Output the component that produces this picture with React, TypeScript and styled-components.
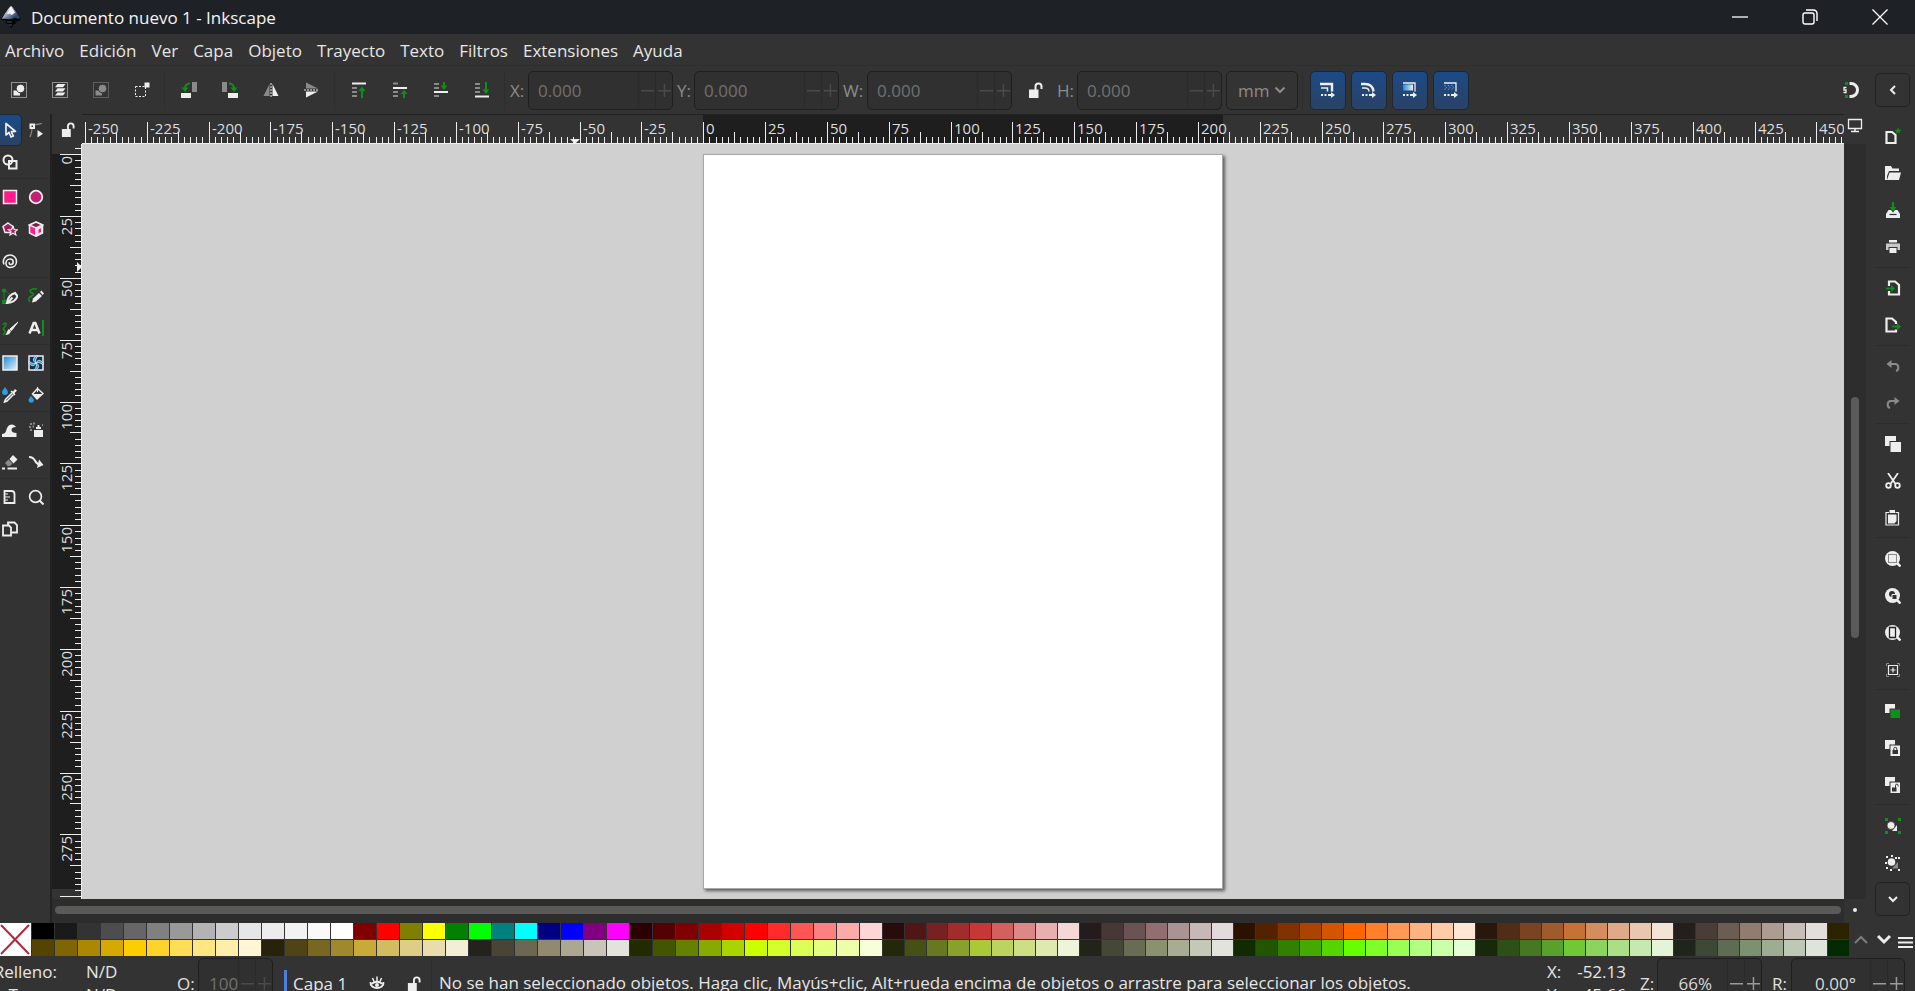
import React, { useLayoutEffect, useRef, useState } from "react";
import styled, { createGlobalStyle, css } from "styled-components";

const W = "#eeeeee";
const G = "#8a8a8a";
const GREEN = "#0f8f17";
const PINK = "#ff1d8e";
const BLUE = "#2a9fe0";
const MM = 2.4735;

const GlobalStyle = createGlobalStyle`
  *, *::before, *::after { box-sizing: border-box; }
  body {
    margin: 0;
    background: #333333;
    color: #e6e6e6;
    font-family: "Open Sans", "Noto Sans", sans-serif;
    font-size: 17px;
    overflow: hidden;
  }
  button, input, select { font: inherit; color: inherit; margin: 0; padding: 0; }
  button { background: none; border: 0; }
  svg { display: block; }
`;

const Shell = styled.div`
  display: grid;
  grid-template-rows: 34px 32px minmax(0, 1fr) 33px 35px;
  height: 100vh;
`;

const TitleBar = styled.header`
  display: flex;
  align-items: center;
  background: #1e2226;
  color: #f4f4f4;
`;
const Logo = styled.div`
  width: 31px;
  padding-left: 1px;
`;
const Title = styled.h1`
  flex: 1;
  margin: 0;
  font-size: 17px;
  font-weight: 400;
`;
const WindowButton = styled.button`
  display: grid;
  place-items: center;
  width: 70px;
  height: 34px;
`;

const MenuBar = styled.nav`
  display: flex;
  align-items: center;
  gap: 15px;
  padding: 3px 0 0 5px;
  border-bottom: 1px solid #2e2e2e;
`;
const MenuItem = styled.button`
  line-height: 24px;
`;

const Workspace = styled.div`
  display: grid;
  grid-template-columns: minmax(0, 1fr) 49px;
  min-height: 0;
`;
const Editor = styled.div`
  display: grid;
  grid-template-rows: 48px minmax(0, 1fr);
  min-height: 0;
`;

const ToolBar = styled.div`
  display: flex;
  align-items: center;
  gap: 4px;
`;
const BarButton = styled.button`
  display: grid;
  place-items: center;
  flex: none;
  width: 37px;
  height: 39px;
`;
const BarSeparator = styled.span`
  flex: none;
  width: 2px;
  height: 39px;
  border-left: 1px solid #2e2e2e;
`;
const Field = styled.div`
  display: flex;
  align-items: center;
  flex: none;
`;
const FieldLabel = styled.label<{ $width: number; $dim?: boolean }>`
  width: ${(p) => p.$width}px;
  color: ${(p) => (p.$dim ? "#8c8c8c" : "#e0e0e0")};
`;
const Spin = styled.div<{ $width: number; $height: number }>`
  display: flex;
  flex: none;
  width: ${(p) => p.$width}px;
  height: ${(p) => p.$height}px;
  background: #303030;
  border: 1px solid #1f1f1f;
  border-radius: 5px;
  overflow: hidden;
`;
const SpinInput = styled.input<{ $dim?: boolean; $align: string; $pad: number }>`
  flex: 1;
  min-width: 0;
  padding: 0 ${(p) => (p.$align === "right" ? p.$pad : 0)}px 0 ${(p) => (p.$align === "left" ? p.$pad : 0)}px;
  border: 0;
  outline: 0;
  background: none;
  text-align: ${(p) => p.$align};
  color: ${(p) => (p.$dim ? "#707070" : "#d8d8d8")};
`;
const SpinButton = styled.button<{ $dim?: boolean }>`
  display: grid;
  place-items: center;
  width: 17px;
  border-left: 1px solid #2b2b2b;
  color: ${(p) => (p.$dim ? "#4a4a4a" : "#9a9a9a")};
`;
const UnitBox = styled.div`
  display: flex;
  align-items: center;
  flex: none;
  width: 72px;
  height: 39px;
  padding-right: 11px;
  border: 1px solid #1f1f1f;
  border-radius: 5px;
  color: #8c8c8c;
`;
const UnitSelect = styled.select`
  flex: 1;
  min-width: 0;
  padding-left: 11px;
  appearance: none;
  border: 0;
  background: none;
  color: #8c8c8c;
`;
const ToggleGroup = styled.div`
  display: flex;
  gap: 5px;
  padding-left: 2px;
`;
const Toggle = styled.button`
  display: grid;
  place-items: center;
  width: 36px;
  height: 39px;
  border: 1px solid #1b2733;
  border-radius: 5px;
  background: linear-gradient(#1b4a87, #2a4265);
`;
const Spacer = styled.span`
  flex: 1;
`;
const SnapButton = styled.button`
  display: grid;
  place-items: center;
  width: 30px;
  height: 39px;
`;

const Body = styled.div`
  display: grid;
  grid-template-columns: 52px minmax(0, 1fr);
  min-height: 0;
`;
const ToolBox = styled.div`
  border-right: 2px solid #222222;
  overflow: hidden;
`;
const ToolGroup = styled.div`
  display: grid;
  grid-template-columns: 22px 28px;
  grid-auto-rows: 32px;
  & + & {
    border-top: 1px solid #2d2d2d;
    padding-top: 2px;
  }
`;
const ToolButton = styled.button<{ $active?: boolean; $first?: boolean }>`
  display: grid;
  place-items: center;
  ${(p) => p.$first && css`padding-right: 2px;`}
  ${(p) =>
    p.$active &&
    css`
      border: 1px solid #1b2733;
      border-left: 0;
      border-radius: 0 5px 5px 0;
      background: linear-gradient(#1b4a87, #2a4265);
    `}
`;

const CanvasGrid = styled.div`
  display: grid;
  grid-template-columns: 30px minmax(0, 1fr) 22px;
  grid-template-rows: 30px minmax(0, 1fr) 24px;
  min-height: 0;
`;
const Corner = styled.button<{ $top?: boolean }>`
  display: grid;
  place-items: ${(p) => (p.$top ? "start center" : "center")};
  padding-top: ${(p) => (p.$top ? 4 : 0)}px;
`;
const TopRuler = styled.div`
  border-top: 1px solid #222222;
  overflow: hidden;
`;
const SideRuler = styled.div`
  overflow: hidden;
  background: #333333;
`;
const Tick = styled.text`
  font-size: 15px;
  fill: #dcdcdc;
`;
const Canvas = styled.main`
  display: grid;
  place-items: center;
  overflow: hidden;
  background: #d0d0d0;
`;
const Page = styled.div`
  width: 520px;
  height: 735px;
  background: #ffffff;
  border: 1px solid #a8a8a8;
  box-shadow: 2px 2px 3px rgba(0, 0, 0, 0.55);
`;
const VScroll = styled.div`
  display: flex;
  flex-direction: column;
  align-items: center;
  background: #2d2d2d;
`;
const VLead = styled.span`
  flex: 253 0 0;
`;
const VThumb = styled.span`
  flex: 241 0 0;
  width: 8px;
  border-radius: 4px;
  background: #5a5a5a;
`;
const VTrail = styled.span`
  flex: 261 0 0;
`;
const HScroll = styled.div`
  grid-column: 1 / 3;
  padding: 7px 3px 0;
  background: #2d2d2d;
`;
const HThumb = styled.div`
  height: 8px;
  border-radius: 4px;
  background: #5a5a58;
`;

const CommandBar = styled.aside`
  display: flex;
  flex-direction: column;
  min-height: 0;
  padding: 7px 5px 7px 9px;
`;
const FrameButton = styled.button`
  display: grid;
  place-items: center;
  flex: none;
  height: 34px;
  border: 1px solid #222222;
  border-radius: 5px;
`;
const CommandList = styled.div`
  display: flex;
  flex-direction: column;
  flex: 1;
  min-height: 0;
  padding: 11px 0 1px;
  overflow: hidden;
`;
const CommandButton = styled.button`
  display: grid;
  place-items: center;
  flex: 1 1 0;
  min-height: 0;
`;
const CommandSeparator = styled.span`
  flex: none;
  height: 1px;
  margin: 1px 0 2px;
  background: #2c2c2c;
`;

const PaletteBar = styled.div`
  display: grid;
  grid-template-columns: 31px minmax(0, 1fr) 65px;
  column-gap: 1px;
`;
const NoColor = styled.button`
  background: #ffffff;
`;
const Swatches = styled.div`
  display: grid;
  grid-template-columns: repeat(37, 22fr) repeat(44, 21fr);
  grid-template-rows: 16px 16px;
  gap: 1px;
`;
const Swatch = styled.button<{ $color: string }>`
  background: ${(p) => p.$color};
`;
const PaletteButtons = styled.div`
  display: grid;
  grid-template-columns: 22px 24px 18px;
  align-items: center;
`;
const PaletteButton = styled.button`
  display: grid;
  place-items: center;
  height: 33px;
`;

const StatusBar = styled.footer`
  overflow: hidden;
`;
const StatusRow = styled.div`
  display: flex;
  align-items: center;
  height: 50px;
  margin-top: 2px;
`;
const FillStroke = styled.dl`
  display: grid;
  flex: none;
  grid-template-columns: 57px 90px;
  column-gap: 29px;
  width: 177px;
  margin: 0;
  line-height: 23px;
`;
const Term = styled.dt`
  display: flex;
  justify-content: flex-end;
  white-space: nowrap;
`;
const Value = styled.dd<{ $right?: boolean }>`
  margin: 0;
  text-align: ${(p) => (p.$right ? "right" : "left")};
`;
const LayerButton = styled.button`
  flex: none;
  width: 75px;
  height: 26px;
  margin-left: 11px;
  padding-left: 6px;
  border-left: 3px solid #4a7fe0;
  text-align: left;
`;
const StatusIcon = styled.button`
  display: grid;
  place-items: center;
  flex: none;
  width: 36px;
  height: 30px;
`;
const Message = styled.p`
  flex: 1;
  min-width: 0;
  margin: 0;
  padding-left: 7px;
  border-left: 1px solid #2e2e2e;
  line-height: 50px;
  white-space: nowrap;
  overflow: hidden;
`;
const Coordinates = styled.dl`
  display: grid;
  flex: none;
  grid-template-columns: 19px 60px;
  margin: 0 14px 0 0;
  line-height: 23px;
`;
const StatusGap = styled.span`
  flex: none;
  width: 10px;
`;

type IconProps = { children: React.ReactNode; size?: number };
const Icon = ({ children, size = 16 }: IconProps) => (
  <svg width={size} height={size} viewBox="0 0 16 16" fill="none" aria-hidden="true">
    {children}
  </svg>
);

const dotted = (c: string) => <rect x="0.5" y="0.5" width="15" height="15" stroke={c} strokeDasharray="1 1" />;

const lockOpen = (
  <>
    <path d="M2 7.500h9.500V16H2z" fill={W} />
    <path d="M8.500 8.500V4.500a3 3 0 0 1 6 0V7" stroke={W} strokeWidth="2" />
  </>
);
const zigArrow = (
  <>
    <path d="M1 13h2m1.500 0h2m1.500 0h4" stroke={W} strokeWidth="2" />
    <path d="M11 10v6l4-3z" fill={W} />
  </>
);

const barIcons = {
  selectAll: <Icon>{dotted(W)}<path d="M2.500 8.500h6.500v5H2.500z" fill={W} /><circle cx="9.500" cy="6.500" r="4.300" fill={W} stroke="#333" strokeWidth="1" /></Icon>,
  selectLayers: <Icon>{dotted(W)}<path d="M5.500 2H13.500l-2.500 3.200H3zM5.500 6.200H13.500L11 9.400H3zM5.500 10.400H13.500L11 13.600H3z" fill={W} /></Icon>,
  deselect: <Icon>{dotted(G)}<path d="M2.500 8.500h6.500v5H2.500z" fill={G} /><circle cx="9.500" cy="6.500" r="4.300" fill={G} stroke="#333" strokeWidth="1" /></Icon>,
  touch: <Icon><path d="M1.500 4.500h10v10h-10z" stroke={W} strokeDasharray="2 1.500" /><path d="M10.500 0.500h5v5h-5z" fill={W} /></Icon>,
  ccw: <Icon><path d="M0 11h10v5H0z" fill={W} /><path d="M11 0h5v10h-5z" fill={G} /><path d="M9 1.500C6 1.500 4 3.500 4 7" stroke={GREEN} strokeWidth="2" /><path d="M0.500 5.500h7L4 10z" fill={GREEN} /></Icon>,
  cw: <Icon><path d="M6 11h10v5H6z" fill={W} /><path d="M0 0h5v10H0z" fill={G} /><path d="M7 1.500c3 0 5 2 5 5.500" stroke={GREEN} strokeWidth="2" /><path d="M8.500 5.500h7L12 10z" fill={GREEN} /></Icon>,
  flipH: <Icon><path d="M6.500 2v12H0.500z" fill={G} /><path d="M9.500 2v12h6z" fill={W} /><path d="M8 1v15" stroke={W} strokeDasharray="2 1" /></Icon>,
  flipV: <Icon><path d="M2 6.500V0.500l12 6z" fill={G} /><path d="M2 9.500v6l12-6z" fill={W} /><path d="M0 8h15" stroke={W} strokeDasharray="2 1" /></Icon>,
  toTop: <Icon><path d="M1 1.500h14" stroke={W} strokeWidth="2" /><path d="M1 6h5M1 10h5M1 14h5" stroke={G} strokeWidth="2" /><path d="M11 16V7" stroke={GREEN} strokeWidth="2" /><path d="M7.500 9L11 4.500 14.500 9z" fill={GREEN} /></Icon>,
  raise: <Icon><path d="M1 6h14" stroke={W} strokeWidth="2" /><path d="M1 1.500h5M1 10h5M1 14h5" stroke={G} strokeWidth="2" /><path d="M12 16v-5" stroke={GREEN} strokeWidth="2" /><path d="M8.500 12L12 8l3.500 4z" fill={GREEN} /></Icon>,
  lower: <Icon><path d="M1 10h14" stroke={W} strokeWidth="2" /><path d="M1 2h5M1 6h5M1 14h5" stroke={G} strokeWidth="2" /><path d="M11 0v4" stroke={GREEN} strokeWidth="2" /><path d="M7.500 3.500L11 8l3.500-4.500z" fill={GREEN} /></Icon>,
  toBottom: <Icon><path d="M1 14.500h14" stroke={W} strokeWidth="2" /><path d="M1 2h5M1 6h5M1 10h5" stroke={G} strokeWidth="2" /><path d="M12 0v8" stroke={GREEN} strokeWidth="2" /><path d="M8.500 7.500L12 12l3.500-4.500z" fill={GREEN} /></Icon>,
};

const toggleIcons: [string, React.ReactNode][] = [
  ["Escalar grosor del trazo", <Icon><path d="M0 2h12v7.500" stroke={W} strokeWidth="2.400" /><path d="M1 6h6.500v3.500" stroke={W} strokeWidth="1.500" />{zigArrow}</Icon>],
  ["Escalar esquinas redondeadas", <Icon><path d="M0 2h4c5 0 8 3 8.500 7.500" stroke={W} strokeWidth="2.400" /><path d="M1 6h3c2.500 0 4 1.500 4 3.500" stroke={W} strokeWidth="1.500" />{zigArrow}</Icon>],
  ["Transformar degradados", <Icon><defs><linearGradient id="bar-grad"><stop stopColor="#1d8fe0" /><stop offset="1" stopColor={W} /></linearGradient></defs><path d="M1 1h12v8.500" stroke={W} strokeWidth="1.300" /><path d="M1 2.500h10v6H1z" fill="url(#bar-grad)" />{zigArrow}</Icon>],
  ["Transformar patrones", <Icon><path d="M1 1h12v8.500" stroke={W} strokeWidth="1.300" /><path d="M1.500 3l2 2.500-2 2.500M5 3l2 2.500L5 8M8.500 3l2 2.500-2 2.500" stroke="#5fb4ee" strokeDasharray="1.500 .7" />{zigArrow}</Icon>],
];

type Tool = { label: string; icon: React.ReactNode; active?: boolean };
const toolGroups: Tool[][] = [
  [
    { label: "Seleccionar", active: true, icon: <Icon><path d="M4 1.500v11.500l3-2.500 2 4.500 2.300-1-2-4.300 4.200-.2z" stroke={W} strokeWidth="1.700" strokeLinejoin="round" /></Icon> },
    { label: "Nodos", icon: <Icon><path d="M2.500 2.500h3.500V6H2.500z" stroke={W} strokeWidth="2" /><path d="M7 3c3-1.500 5-1 7-1.500M4 7c0 3-1 5-2 8" stroke={G} strokeWidth="1.200" /><path d="M9.500 8v7.500L15 11.800z" fill={W} /></Icon> },
    { label: "Constructor de formas", icon: <Icon><circle cx="6" cy="6" r="4.500" stroke={W} strokeWidth="2" /><path d="M7 7h7.500v7.500H7z" stroke={W} strokeWidth="2" /></Icon> },
  ],
  [
    { label: "Rectángulo", icon: <Icon><rect x="1.500" y="1.500" width="13" height="13" fill={PINK} stroke={W} strokeWidth="1.500" /></Icon> },
    { label: "Elipse", icon: <Icon><circle cx="8" cy="8" r="6.300" fill="#c41f73" stroke={W} strokeWidth="1.800" /></Icon> },
    { label: "Estrella", icon: <Icon><path d="M6 2l5 3.500-1.800 6H3L1 5.500z" fill="#a0205f" stroke={W} strokeWidth="1.500" /><path d="M11 5.500l1.300 3 3.200.2-2.500 2 .9 3.300-2.900-1.700L8 14l1-3.200-2.500-2 3.200-.3z" fill="#a0205f" stroke={W} strokeWidth="1.200" /></Icon> },
    { label: "Caja 3D", icon: <Icon><path d="M8 1l6.500 3v8L8 15.300 1.500 12V4z" fill={PINK} stroke={W} strokeWidth="1.500" /><path d="M1.500 4L8 7l6.500-3L8 1z" fill="#7c1f4c" stroke={W} strokeWidth="1.500" /><path d="M8 7l6-3v8l-6 3z" fill="#f8dfea" /><path d="M8 7v8" stroke={W} strokeWidth="2" /><path d="M10.500 8.500L13 7.300v3.700l-2.500 1.300z" fill={PINK} /></Icon> },
    { label: "Espiral", icon: <Icon><path d="M2 11.500C0 7 3 2 8 2c4 0 6.500 3 6.500 6.500 0 4-3 6-6 6-3 0-4.500-2-4.500-4.300C4 8 5.500 6 8 6c2 0 3.200 1.300 3.200 3S10 11.500 8.700 11.500 7 10.500 7.500 9.200" stroke={W} strokeWidth="1.600" /></Icon> },
  ],
  [
    { label: "Pluma", icon: <Icon><path d="M2 2v12" stroke={GREEN} /><circle cx="2" cy="2.500" r="2" fill={GREEN} /><path d="M0 12h4v4H0z" fill={GREEN} /><path d="M2 3c4 0 4 3 6 3" stroke={GREEN} /><path d="M5 15C5.500 10 8 6.500 13 5l2.500 3C14 12.500 11 14.500 5.500 15l5-5.500" stroke={W} strokeWidth="2" /></Icon> },
    { label: "Lápiz", icon: <Icon><path d="M9 1C4 0 0 3 3 4.500S7 6 3 8.500 1 12 2 14" stroke={GREEN} strokeWidth="1.500" /><path d="M4 14.500l1-4L11 5l3 3-6 5.500z" fill={W} /><path d="M12 4l1.500-1.500L16 5.500 14.500 7z" fill={W} /></Icon> },
    { label: "Pincel caligráfico", icon: <Icon><path d="M1 5c2-3 4-2 3 0S0 9 2 10s1 3-1 5" stroke={GREEN} strokeWidth="1.500" /><path d="M16 2L9.500 10.500 8 9z" fill={W} stroke={W} /><path d="M7 9l2 2c-1 3-3 4-6 4 2-1 2-5 4-6z" fill={W} /></Icon> },
    { label: "Texto", icon: <Icon><path d="M1.500 13.500L5.700 3h1.600L11.500 13.500M3 10h7" stroke={W} strokeWidth="2.500" /><path d="M15 0v16" stroke={GREEN} strokeWidth="2" /></Icon> },
  ],
  [
    { label: "Degradado", icon: <Icon><defs><linearGradient id="tool-grad" x2="1" y2="1"><stop stopColor="#1b86d0" /><stop offset="1" stopColor="#e6f4fd" /></linearGradient></defs><rect x="1" y="1" width="14" height="14" fill="url(#tool-grad)" stroke={W} strokeWidth="1.500" /></Icon> },
    { label: "Malla", icon: <Icon><rect x="1" y="1" width="14" height="14" fill="#16324a" stroke={W} strokeWidth="1.500" /><path d="M8 8C4 6 5 3 8 1h2C8 3 7 5 8 8zM8 8c4 2 3 5 0 7H6c2-2 3-4 2-7zM8 8c-2 4-5 3-7 0V6c2 2 4 3 7 2zM8 8c2-4 5-3 7 0v2c-2-2-4-3-7-2z" fill={BLUE} stroke="#e4f3fc" strokeWidth=".8" /></Icon> },
    { label: "Cuentagotas", icon: <Icon><path d="M3 0c2 3 3 4 3 5a3 3 0 0 1-6 0c0-1 1-2 3-5z" fill={BLUE} /><path d="M10 6L3.500 12.500 2.500 15l2.500-1L11.500 7.500" stroke={W} strokeWidth="1.500" /><path d="M8.500 4.500l1-1 1.500 1 2-2.500 2 1.800L12.500 6l1 1.500-1 1z" fill={W} /></Icon> },
    { label: "Cubo de pintura", icon: <Icon><path d="M3 9c2 2.500 3 3.500 3 4.500a2.800 2.800 0 0 1-5.500 0c0-1 .5-2 2.500-4.500z" fill={BLUE} /><path d="M9.500 1.500l5.500 5-6 5.500-4.500-5z" stroke={W} strokeWidth="1.500" /><path d="M5 7h9.500L9 12z" fill={W} /><path d="M9.500 0v5" stroke={W} /></Icon> },
  ],
  [
    { label: "Retoque", icon: <Icon><path d="M0 15v-3c3.500 0 4-3 5-6 2-4.500 7-4.500 9-1-3 0-4.500 1-4.500 3s2 3 5 3v4z" fill={W} /></Icon> },
    { label: "Aerosol", icon: <Icon><path d="M6 8h9v7H6zM8 5h5v2H8zM9.500 3h2v2h-2z" fill={W} /><path d="M2 2h2M5 1.500h2M1 5h2M4.500 4.500h1.500M2 8h2M14 3h1" stroke={G} strokeWidth="1.800" /></Icon> },
    { label: "Borrador", icon: <Icon><path d="M7.500 5L11 1l4.500 4.500-4 4z" fill={W} /><path d="M3 9l3.500-3.500 4 4L8 12H5.500z" fill={G} /><path d="M0 14.500h3M5.500 14.500h9.500" stroke={W} strokeWidth="2" /></Icon> },
    { label: "Conector", icon: <Icon><path d="M1 3c8 0 4 7 12 8" stroke={W} strokeWidth="2" /><path d="M11 5.500L15.500 11 9 14z" fill={W} /></Icon> },
  ],
  [
    { label: "Medir", icon: <Icon><path d="M2.500 2h7c2 0 3 1.500 3 3v9h-10z" stroke={W} strokeWidth="1.800" /><path d="M3 5h3M3 8h5M3 11h3" stroke={W} strokeWidth="1.200" /></Icon> },
    { label: "Zoom", icon: <Icon><circle cx="7.500" cy="7.500" r="5.900" stroke={W} strokeWidth="1.700" /><path d="M11.500 11.500l4 4" stroke={W} strokeWidth="2" /></Icon> },
    { label: "Páginas", icon: <Icon><path d="M1 4.500h6l2 2v8H1z" stroke={W} strokeWidth="1.800" /><path d="M6 4V1.500h6.500L15 4v7.500H9.500" stroke={W} strokeWidth="1.800" /></Icon> },
  ],
];

const lens = (
  <>
    <circle cx="7.500" cy="7.500" r="7.500" fill={W} />
    <path d="M12 12l3.500 3.500" stroke={W} strokeWidth="2.500" />
  </>
);

const commandGroups: Tool[][] = [
  [
    { label: "Nuevo", icon: <Icon><path d="M1.500 4H7l3.500 3v8h-9z" stroke={W} strokeWidth="2.200" /><path d="M13 -.5l1 2.200 2.300.2-1.800 1.600.6 2.300L13 4.600 10.900 5.800l.6-2.300-1.800-1.600 2.300-.2z" fill={GREEN} /></Icon> },
    { label: "Abrir", icon: <Icon><path d="M0 1h6l1.500 2.500H14V6H4l-2 5v4H0z" fill={W} /><path d="M4.500 7.500H16l-2 7.500H2z" fill={W} /></Icon> },
    { label: "Guardar", icon: <Icon><path d="M8 0v6" stroke={GREEN} strokeWidth="2.200" /><path d="M4.500 5h7L8 9.500z" fill={GREEN} /><path d="M3.500 8H6l2 2.500L10 8h2.500L15 12v4H1v-4z" fill={W} /><path d="M4.500 12.500h7" stroke="#333" strokeWidth="1.200" /></Icon> },
    { label: "Imprimir", icon: <Icon><path d="M4 1h8v2.500H4zM4.500 9h7v5h-7z" fill={W} /><path d="M1 4.500h14V11h-2.500V8h-9v3H1z" fill="#c8c8c8" /></Icon> },
  ],
  [
    { label: "Importar", icon: <Icon><path d="M4 6V1.500h6l4 3.500v9.500H4V11" stroke={W} strokeWidth="2.200" /><path d="M1 8.500h6" stroke={GREEN} strokeWidth="1.800" /><path d="M6 5l4 3.500L6 12z" fill={GREEN} /></Icon> },
    { label: "Exportar", icon: <Icon><path d="M11 12.500v2H1.500v-13H7l4 3.500v2" stroke={W} strokeWidth="2.200" /><path d="M7 9.500h6" stroke={GREEN} strokeWidth="1.800" /><path d="M12 6l4 3.500-4 3.500z" fill={GREEN} /></Icon> },
  ],
  [
    { label: "Deshacer", icon: <Icon><path d="M4 6h6c4 0 4.500 6 1 7" stroke={G} strokeWidth="2" /><path d="M6.500 2v8L1.500 6z" fill={G} /></Icon> },
    { label: "Rehacer", icon: <Icon><path d="M12 6H6c-4 0-4.500 6-1 7" stroke={G} strokeWidth="2" /><path d="M9.500 2v8l5-4z" fill={G} /></Icon> },
  ],
  [
    { label: "Copiar", icon: <Icon><path d="M0 0h11v5H4.500v5H0z" fill={W} /><path d="M5.500 6H16v10H5.500z" fill={W} /></Icon> },
    { label: "Cortar", icon: <Icon><path d="M3 0l7.500 11M13 0L5.500 11" stroke={W} strokeWidth="1.800" /><circle cx="3.500" cy="12.500" r="2.300" stroke={W} strokeWidth="1.800" /><circle cx="12.500" cy="12.500" r="2.300" stroke={W} strokeWidth="1.800" /></Icon> },
    { label: "Pegar", icon: <Icon><path d="M4 2.500H1v12.500h12.500V2.500h-3" stroke={W} strokeWidth="1.200" /><path d="M4.500 0h5.500v3H4.500zM3 4.500h8.500V11l-2 2.500H3z" fill={W} /></Icon> },
  ],
  [
    { label: "Zoom a selección", icon: <Icon>{lens}<path d="M3.500 3.500h8v8h-8z" stroke="#222" strokeDasharray="1 1" /></Icon> },
    { label: "Zoom a dibujo", icon: <Icon>{lens}<circle cx="7" cy="6" r="3" fill="#333" /><path d="M7 6.500h5v5H7z" fill="#333" stroke={W} /></Icon> },
    { label: "Zoom a página", icon: <Icon>{lens}<path d="M4.500 2.500h6v10h-6z" stroke="#222" strokeWidth="1.300" /></Icon> },
    { label: "Centrar página", icon: <Icon><path d="M1.500 4V1.500H4M12 1.500h2.500V4M14.500 12v2.500H12M4 14.500H1.500V12" stroke={G} /><path d="M3.500 3.500h9v9h-9z" stroke={W} strokeWidth="1.200" /><path d="M8 5.500v5M5.500 8h5" stroke={W} strokeWidth="1.200" /></Icon> },
  ],
  [
    { label: "Duplicar", icon: <Icon><path d="M0 1h10v4.500H4.500V10H0z" fill={W} /><path d="M5.500 6.500H15V15H5.500z" fill={GREEN} /></Icon> },
    { label: "Clonar", icon: <Icon><path d="M0 0h10v4.500H4.500V9H0z" fill={W} /><path d="M5.500 5.500H15V16H5.500z" fill={W} /><path d="M7.500 10h5.500v4H7.500z" fill="#333" /><path d="M8.800 10V8.800a1.500 1.500 0 0 1 3 0V10" stroke="#333" /></Icon> },
    { label: "Desconectar clon", icon: <Icon><path d="M0 0h10v4.500H4.500V9H0z" fill={W} /><path d="M5.500 5.500H15V16H5.500z" fill={W} /><path d="M7 10.500h4.500v4H7z" fill="#333" /><path d="M10.500 11V8.500a1.300 1.300 0 0 1 2.600 0v1" stroke="#333" /></Icon> },
  ],
  [
    { label: "Agrupar", icon: <Icon><path d="M0 0h3v3H0zM13 0h3v3h-3zM0 13h3v3H0zM13 13h3v3h-3z" fill={GREEN} /><path d="M12 7v6H7z" fill={W} /><circle cx="6" cy="7.500" r="4" fill={W} stroke="#333" strokeWidth=".8" /></Icon> },
    { label: "Desagrupar", icon: <Icon><path d="M13 7v6.500H7z" fill={G} /><circle cx="6.500" cy="7" r="3.800" fill={W} /><path d="M1 1h2v2H1zM6 0h2v2H6zM13 2h2v2h-2zM0 7h2v2H0zM1 12h2v2H1zM5 14h2v2H5zM13 14h2v2h-2zM10 2h2v2h-2z" fill={W} /></Icon> },
  ],
];

const topRow = (
  "000000 1a1a1a 333333 4d4d4d 666666 808080 999999 b3b3b3 cccccc e6e6e6 ececec f2f2f2 f9f9f9 ffffff " +
  "800000 ff0000 808000 ffff00 008000 00ff00 008080 00ffff 000080 0000ff 800080 ff00ff " +
  "2b0000 550000 800000 aa0000 d40000 ff0000 ff2a2a ff5555 ff8080 ffaaaa ffd5d5 " +
  "280b0b 501616 782121 a02c2c c83737 d35f5f de8787 e9afaf f4d7d7 " +
  "241c1c 483737 6c5353 916f6f ac9393 c8b7b7 e3dbdb " +
  "2b1100 552200 803300 aa4400 d45500 ff6600 ff7f2a ff9955 ffb380 ffccaa ffe6d5 " +
  "28170b 502d16 784421 a05a2c c87137 d38d5f deaa87 e9c6af f4e3d7 " +
  "241f1c 483e37 6c5d53 917c6f ac9d93 c8beb7 e3dedb 2b2200"
).split(" ");
const bottomRow = (
  "554400 806600 aa8800 d4aa00 ffcc00 ffd42a ffdd55 ffe680 ffeeaa fff6d5 " +
  "28220b 504416 786721 a0892c c8ab37 d3bc5f decd87 e9ddaf f4eed7 " +
  "24221c 484537 6c6753 918a6f aca793 c8c4b7 e3e2db " +
  "222b00 445500 668000 88aa00 aad400 ccff00 d4ff2a ddff55 e5ff80 eeffaa f6ffd5 " +
  "23280b 445016 677821 89a02c abc837 bcd35f cdde87 dde9af eef4d7 " +
  "22241c 454837 676c53 8a916f a7ac93 c4c8b7 e2e3db " +
  "112b00 225500 338000 44aa00 55d400 66ff00 7fff2a 99ff55 b3ff80 ccffaa e5ffd5 " +
  "17280b 2d5016 447821 5aa02c 71c837 8dd35f aade87 c6e9af e3f4d7 " +
  "1f241c 3e4837 5d6c53 7c916f 9dac93 bec8b7 dee3db 002b00"
).split(" ");

const ticks = Array.from({ length: 801 }, (_, i) => (i - 360) * 2.5);
const tickLength = (mm: number) => (mm % 25 === 0 ? 22 : mm % 12.5 === 0 ? 12 : 7);

/* Length in pixels of the element that holds a ruler, so only visible marks are drawn. */
function useExtent(axis: "width" | "height") {
  const ref = useRef<HTMLDivElement>(null);
  const [extent, setExtent] = useState(0);
  useLayoutEffect(() => {
    const el = ref.current;
    if (!el) return;
    const measure = () => setExtent(el.getBoundingClientRect()[axis]);
    measure();
    const observer = new ResizeObserver(measure);
    observer.observe(el);
    return () => observer.disconnect();
  }, [axis]);
  return [ref, extent] as const;
}

/* Both rulers are centred on the page: 105 mm across, 148.5 mm down. */
function HorizontalRuler() {
  const [ref, width] = useExtent("width");
  const at = (mm: number) => Math.round(width / 2 + (mm - 105) * MM);
  const shown = ticks.filter((mm) => at(mm) >= 0 && at(mm) < width);
  return (
    <TopRuler ref={ref}>
      <svg width="100%" height="29" role="img" aria-label="Regla horizontal">
        <rect x={at(0)} width={at(210) - at(0)} height="29" fill="#1e1e1e" />
        {shown.map((mm) => (
          <rect key={mm} x={at(mm)} y={29 - tickLength(mm)} width="1" height={tickLength(mm)} fill={W} />
        ))}
        {shown.filter((mm) => mm % 25 === 0 && at(mm) + 26 < width).map((mm) => (
          <Tick key={mm} x={at(mm) + 3} y="19">{mm}</Tick>
        ))}
        <path d={`M${at(-52)} 29l-5-5h10z`} fill={W} />
        <rect y="28" width="100%" height="1" fill={W} />
      </svg>
    </TopRuler>
  );
}

function VerticalRuler() {
  const [ref, height] = useExtent("height");
  const at = (mm: number) => Math.round(height / 2 + (mm - 148.5) * MM);
  const shown = ticks.filter((mm) => at(mm) >= 0 && at(mm) < height);
  return (
    <SideRuler ref={ref}>
      <svg width="30" height="100%" role="img" aria-label="Regla vertical">
        <rect y={at(0)} width="30" height={at(297) - at(0)} fill="#1e1e1e" />
        {shown.map((mm) => (
          <rect key={mm} x={30 - tickLength(mm)} y={at(mm)} width={tickLength(mm)} height="1" fill={W} />
        ))}
        {shown.filter((mm) => mm % 25 === 0 && at(mm) + 30 < height).map((mm) => (
          <Tick key={mm} textAnchor="end" transform={`translate(20 ${at(mm) + 2}) rotate(-90)`}>{mm}</Tick>
        ))}
        <path d={`M30 ${at(45.5)}l-5-5v10z`} fill={W} />
        <rect x="29" width="1" height="100%" fill={W} />
      </svg>
    </SideRuler>
  );
}

const Minus = () => <svg width="13" height="13" viewBox="0 0 13 13" aria-hidden="true"><path d="M0 6h13v1.500H0z" fill="currentColor" /></svg>;
const Plus = () => <svg width="13" height="13" viewBox="0 0 13 13" aria-hidden="true"><path d="M0 6h13v1.500H0zM5.700 0h1.500v13H5.700z" fill="currentColor" /></svg>;

type NumberFieldProps = {
  id: string; label: string; value: string; labelWidth: number; width: number;
  height?: number; dimLabel?: boolean; dim?: boolean; align?: string; pad?: number;
};
function NumberField({ id, label, value, labelWidth, width, height = 39, dimLabel, dim, align = "left", pad = 9 }: NumberFieldProps) {
  return (
    <Field>
      <FieldLabel htmlFor={id} $width={labelWidth} $dim={dimLabel}>{label}</FieldLabel>
      <Spin $width={width} $height={height}>
        <SpinInput id={id} defaultValue={value} $dim={dim} $align={align} $pad={pad} />
        <SpinButton $dim={dim} aria-label={`Disminuir ${label}`}><Minus /></SpinButton>
        <SpinButton $dim={dim} aria-label={`Aumentar ${label}`}><Plus /></SpinButton>
      </Spin>
    </Field>
  );
}

const Chevron = ({ d, color = W, w = 2 }: { d: string; color?: string; w?: number }) => (
  <Icon><path d={d} stroke={color} strokeWidth={w} /></Icon>
);

const menus = ["Archivo", "Edición", "Ver", "Capa", "Objeto", "Trayecto", "Texto", "Filtros", "Extensiones", "Ayuda"];

export default function App() {
  return (
    <>
      <GlobalStyle />
      <Shell>
        <TitleBar>
          <Logo>
            <svg width="20" height="22" viewBox="0 0 20 22" aria-hidden="true">
              <defs><linearGradient id="logo" x2="1" y2="1"><stop offset="0.3" stopColor="#d5dbe3" /><stop offset="0.75" stopColor="#31486d" /></linearGradient></defs>
              <path d="M10 0c1 0 9 10 9.500 13 .3 2-4 2-5.500 3 2 1 0 2-1 2l-3 4-2.500-4L4 17l2-2C4 14 .5 15 .5 13 1.500 10 9 0 10 0z" fill="#030406" />
              <path d="M10 0c1 0 7 8 9 12-2 2-4-1-5.500 0-2 0-2 2-4 1-2 1-4-1-8.500 0C2 10 9 0 10 0z" fill="url(#logo)" />
              <path d="M10 .5l4 6-2 1.500-1.500 1L9 7.500 6 8z" fill="#fafafa" />
              <path d="M6 16h5M8 19h3" stroke="#4a5058" />
            </svg>
          </Logo>
          <Title>Documento nuevo 1 - Inkscape</Title>
          <WindowButton aria-label="Minimizar"><Icon><path d="M0 8h16" stroke="#fff" strokeWidth="1.300" /></Icon></WindowButton>
          <WindowButton aria-label="Restaurar"><Icon><rect x="1" y="4" width="11" height="11" rx="2" stroke="#fff" strokeWidth="1.400" /><path d="M4 1h7.500A3.500 3.500 0 0 1 15 4.500V12" stroke="#fff" strokeWidth="1.400" /></Icon></WindowButton>
          <WindowButton aria-label="Cerrar"><Icon><path d="M.5.500l15 15M15.500.500l-15 15" stroke="#fff" strokeWidth="1.300" /></Icon></WindowButton>
        </TitleBar>

        <MenuBar>
          {menus.map((m) => <MenuItem key={m}>{m}</MenuItem>)}
        </MenuBar>

        <Workspace>
          <Editor>
            <ToolBar>
              <BarButton aria-label="Seleccionar todo">{barIcons.selectAll}</BarButton>
              <BarButton aria-label="Seleccionar en todas las capas">{barIcons.selectLayers}</BarButton>
              <BarButton aria-label="Deseleccionar">{barIcons.deselect}</BarButton>
              <BarButton aria-label="Selección por toque">{barIcons.touch}</BarButton>
              <BarSeparator />
              <BarButton aria-label="Rotar a la izquierda">{barIcons.ccw}</BarButton>
              <BarButton aria-label="Rotar a la derecha">{barIcons.cw}</BarButton>
              <BarButton aria-label="Reflejo horizontal">{barIcons.flipH}</BarButton>
              <BarButton aria-label="Reflejo vertical">{barIcons.flipV}</BarButton>
              <BarSeparator />
              <BarButton aria-label="Traer al frente">{barIcons.toTop}</BarButton>
              <BarButton aria-label="Elevar">{barIcons.raise}</BarButton>
              <BarButton aria-label="Bajar">{barIcons.lower}</BarButton>
              <BarButton aria-label="Enviar al fondo">{barIcons.toBottom}</BarButton>
              <BarSeparator />
              <NumberField id="x" label="X:" value="0.000" labelWidth={18} width={145} dimLabel dim />
              <NumberField id="y" label="Y:" value="0.000" labelWidth={17} width={145} dimLabel dim />
              <NumberField id="w" label="W:" value="0.000" labelWidth={24} width={145} dimLabel dim />
              <BarButton aria-label="Bloquear proporciones">
                <Icon>{lockOpen}</Icon>
              </BarButton>
              <NumberField id="h" label="H:" value="0.000" labelWidth={20} width={145} dimLabel dim />
              <UnitBox>
                <UnitSelect aria-label="Unidades" defaultValue="mm"><option>mm</option><option>px</option></UnitSelect>
                <svg width="12" height="8" viewBox="0 0 12 8" fill="none" aria-hidden="true"><path d="M1.500 1.500L6 6l4.500-4.500" stroke="currentColor" strokeWidth="2" /></svg>
              </UnitBox>
              <BarSeparator />
              <ToggleGroup>
                {toggleIcons.map(([label, icon]) => <Toggle key={label} aria-label={label} aria-pressed="true">{icon}</Toggle>)}
              </ToggleGroup>
              <Spacer />
              <SnapButton aria-label="Ajuste">
                <Icon><path d="M6.500 1.500H8a6.500 6.500 0 0 1 0 13H6.500" stroke={W} strokeWidth="3" /><path d="M2 0h3v3H2zM2 13h3v3H2z" fill={GREEN} /><path d="M3.500 5.500H1v2.500h2v2.500H.5" stroke={W} strokeWidth="1.300" /></Icon>
              </SnapButton>
            </ToolBar>

            <Body>
              <ToolBox>
                {toolGroups.map((group, g) => (
                  <ToolGroup key={g}>
                    {group.map((t, i) => (
                      <ToolButton key={t.label} aria-label={t.label} $active={t.active} $first={i % 2 === 0}>{t.icon}</ToolButton>
                    ))}
                  </ToolGroup>
                ))}
              </ToolBox>
              <CanvasGrid>
                <Corner aria-label="Bloquear guías">
                  <Icon size={15}>{lockOpen}</Icon>
                </Corner>
                <HorizontalRuler />
                <Corner $top aria-label="Modo de visualización">
                  <Icon><path d="M1.500 1.500h13v9h-13z" stroke={W} strokeWidth="1.300" /><path d="M8 11v2M4 13.500h8" stroke={W} strokeWidth="1.500" /></Icon>
                </Corner>
                <VerticalRuler />
                <Canvas><Page /></Canvas>
                <VScroll><VLead /><VThumb /><VTrail /></VScroll>
                <HScroll><HThumb /></HScroll>
                <Corner aria-label="Centrar lienzo"><Icon><circle cx="8" cy="7" r="2" fill={W} /></Icon></Corner>
              </CanvasGrid>
            </Body>
          </Editor>

          <CommandBar>
            <FrameButton aria-label="Opciones de ajuste"><Chevron d="M10 4L6 8l4 4" /></FrameButton>
            <CommandList>
              {commandGroups.map((group, g) => (
                <React.Fragment key={g}>
                  {g > 0 && <CommandSeparator />}
                  {group.map((c) => <CommandButton key={c.label} aria-label={c.label}>{c.icon}</CommandButton>)}
                </React.Fragment>
              ))}
            </CommandList>
            <FrameButton aria-label="Más órdenes"><Chevron d="M4 6l4 4 4-4" /></FrameButton>
          </CommandBar>
        </Workspace>

        <PaletteBar>
          <NoColor aria-label="Ninguno">
            <svg width="31" height="33" viewBox="0 0 31 33" aria-hidden="true"><path d="M1 2l28 29M29 2L1 31" stroke="#b5283c" strokeWidth="2" /></svg>
          </NoColor>
          <Swatches>
            {[...topRow, ...bottomRow].map((c, i) => <Swatch key={i} $color={`#${c}`} aria-label={`#${c}`} />)}
          </Swatches>
          <PaletteButtons>
            <PaletteButton aria-label="Subir"><Chevron d="M2 11l6-6 6 6" color="#7c7c7c" /></PaletteButton>
            <PaletteButton aria-label="Bajar"><Chevron d="M2 4l6 6 6-6" w={3} /></PaletteButton>
            <PaletteButton aria-label="Menú de paleta"><Icon><path d="M1 6h15M1 10.500h15M1 15h15" stroke={W} strokeWidth="2" /></Icon></PaletteButton>
          </PaletteButtons>
        </PaletteBar>

        <StatusBar>
          <StatusRow>
            <FillStroke>
              <Term>Relleno:</Term><Value>N/D</Value>
              <Term>Trazo:</Term><Value>N/D</Value>
            </FillStroke>
            <NumberField id="opacity" label="O:" value="100" labelWidth={21} width={75} height={50} dim pad={10} />
            <LayerButton>Capa 1</LayerButton>
            <StatusIcon aria-label="Visibilidad de la capa">
              <Icon><path d="M1.500 7c-1 8 14 8 13 0M3 9c2-3 8-3 10 0" stroke={W} strokeWidth="1.800" /><circle cx="8" cy="10" r="2" fill={W} /><path d="M8 1.500v5M3.500 3l1.500 3.500M12.500 3L11 6.500" stroke={W} strokeWidth="1.500" /></Icon>
            </StatusIcon>
            <StatusIcon aria-label="Bloqueo de la capa"><Icon size={15}>{lockOpen}</Icon></StatusIcon>
            <Message>No se han seleccionado objetos. Haga clic, Mayús+clic, Alt+rueda encima de objetos o arrastre para seleccionar los objetos.</Message>
            <Coordinates>
              <dt>X:</dt><Value $right>-52.13</Value>
              <dt>Y:</dt><Value $right>45.66</Value>
            </Coordinates>
            <NumberField id="zoom" label="Z:" value="66%" labelWidth={17} width={105} height={50} align="right" pad={15} />
            <StatusGap />
            <NumberField id="rotation" label="R:" value="0.00°" labelWidth={19} width={114} height={50} align="right" pad={14} />
            <StatusGap />
          </StatusRow>
        </StatusBar>
      </Shell>
    </>
  );
}
